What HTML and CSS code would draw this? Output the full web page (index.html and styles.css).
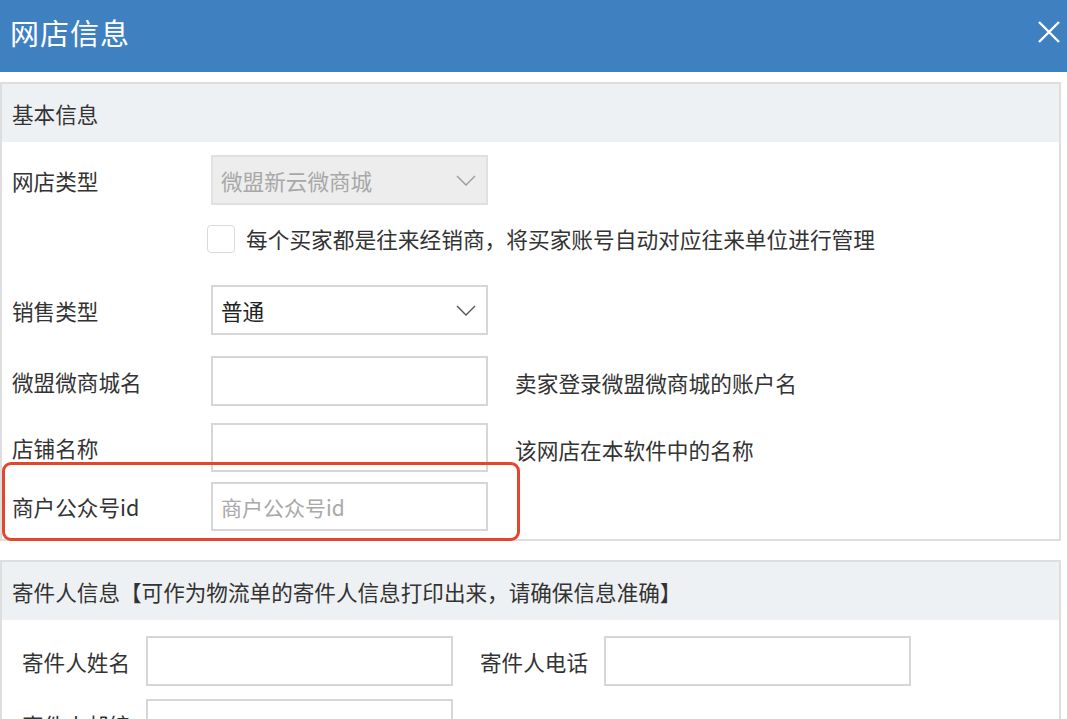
FILE: index.html
```html
<!DOCTYPE html>
<html lang="zh-CN">
<head>
  <meta charset="UTF-8">
  <title>网店信息</title>
  <link rel="stylesheet" href="styles.css">
</head>
<body>
  <div class="dialog-head">
    <h1>网店信息</h1>
    <span class="close">
      <svg width="22" height="22" viewBox="0 0 22 22"><path d="M1 1 L21 21 M21 1 L1 21" stroke="#fff" stroke-width="2.4" fill="none"/></svg>
    </span>
  </div>

  <div class="panel">
    <div class="panel-title">基本信息</div>
    <div class="panel-body">
      <div class="row r1">
        <label class="lbl">网店类型</label>
        <div class="select disabled">
          <span>微盟新云微商城</span>
          <svg width="20" height="11" viewBox="0 0 20 11"><polyline points="1,1 10,10 19,1" fill="none" stroke="#9a9a9a" stroke-width="1.4"/></svg>
        </div>
      </div>
      <div class="row check-row">
        <span class="checkbox"></span>
        <span class="check-text">每个买家都是往来经销商，将买家账号自动对应往来单位进行管理</span>
      </div>
      <div class="row r3">
        <label class="lbl">销售类型</label>
        <div class="select">
          <span>普通</span>
          <svg width="20" height="11" viewBox="0 0 20 11"><polyline points="1,1 10,10 19,1" fill="none" stroke="#555" stroke-width="1.4"/></svg>
        </div>
      </div>
      <div class="row r4">
        <label class="lbl">微盟微商城名</label>
        <input class="field" type="text">
        <span class="help help-low">卖家登录微盟微商城的账户名</span>
      </div>
      <div class="row r5">
        <label class="lbl">店铺名称</label>
        <input class="field" type="text">
        <span class="help help-low">该网店在本软件中的名称</span>
      </div>
      <div class="row r6">
        <label class="lbl">商户公众号id</label>
        <input class="field" type="text" placeholder="商户公众号id">
        <div class="highlight"></div>
      </div>
    </div>
  </div>

  <div class="panel panel-2">
    <div class="panel-title">寄件人信息【可作为物流单的寄件人信息打印出来，请确保信息准确】</div>
    <div class="panel-body body-2">
      <div class="row pair">
        <label class="lbl2">寄件人姓名</label>
        <input class="field2" type="text">
        <label class="lbl2 second">寄件人电话</label>
        <input class="field2" type="text">
      </div>
      <div class="row pair r-next">
        <label class="lbl2">寄件人邮编</label>
        <input class="field2" type="text">
      </div>
    </div>
  </div>
</body>
</html>
```

FILE: styles.css
```css
body {
  margin: 0;
  padding: 0;
  background: #fff;
  font-family: "Noto Sans CJK SC", "Liberation Sans", sans-serif;
  color: #333;
  overflow: hidden;
}

.dialog-head {
  height: 72px;
  background-color: #3f80c1;
  display: flex;
  align-items: center;
  justify-content: space-between;
  padding: 0 7px 0 10px;
}

.dialog-head h1 {
  margin: 0 0 8px 0;
  font-size: 29px;
  font-weight: 400;
  color: #fff;
  letter-spacing: 1px;
}

.close {
  display: flex;
  margin-bottom: 8px;
}

.panel {
  margin: 10px 6px 0 0;
  border: 2px solid #dedede;
}

.panel-title {
  height: 58px;
  background-color: #eef1f4;
  display: flex;
  align-items: center;
  padding-left: 10px;
  font-size: 21.6px;
}

.panel-body {
  padding: 13px 10px 8px 10px;
}

.row {
  display: flex;
  align-items: center;
  position: relative;
}

.lbl {
  width: 199px;
  font-size: 21.6px;
}

.select {
  width: 277px;
  height: 50px;
  box-sizing: border-box;
  border: 2px solid #d6d6d6;
  display: flex;
  align-items: center;
  justify-content: space-between;
  padding: 0 10px 0 8px;
  font-size: 21.6px;
  color: #222;
}

.select.disabled {
  background-color: #ededed;
  border-color: #e0e0e0;
  color: #a8a8a8;
}

.check-row {
  margin-top: 18px;
  padding-left: 195px;
}

.checkbox {
  width: 26px;
  height: 26px;
  border: 1px solid #dadada;
  border-radius: 4px;
}

.check-text {
  margin-left: 11px;
  font-size: 21.7px;
}

.r3 { margin-top: 31px; }
.r4 { margin-top: 21px; }
.r5 { margin-top: 17px; }
.r6 { margin-top: 10px; }

.field {
  width: 277px;
  height: 50px;
  border: 2px solid #d6d6d6;
  box-sizing: border-box;
  padding: 0 8px;
  font-family: inherit;
  font-size: 21px;
  color: #333;
  outline: none;
}

.r5 .field, .r6 .field { height: 49px; }

.field::placeholder {
  color: #a9a9a9;
}

.help {
  margin-left: 27px;
  font-size: 21.7px;
}

.help-low {
  margin-top: 3px;
}

.highlight {
  position: absolute;
  left: -10px;
  top: -20px;
  width: 518px;
  height: 79px;
  border: 3px solid #e4462d;
  border-radius: 9px;
  box-sizing: border-box;
}

.panel-2 {
  margin-top: 19px;
}

.body-2 {
  padding: 16px 10px 0 20px;
}

.lbl2 {
  width: 124px;
  font-size: 21.6px;
}

.lbl2.second {
  margin-left: 27px;
}

.field2 {
  width: 307px;
  height: 50px;
  border: 2px solid #d6d6d6;
  box-sizing: border-box;
  outline: none;
}

.r-next {
  margin-top: 13px;
}
```
